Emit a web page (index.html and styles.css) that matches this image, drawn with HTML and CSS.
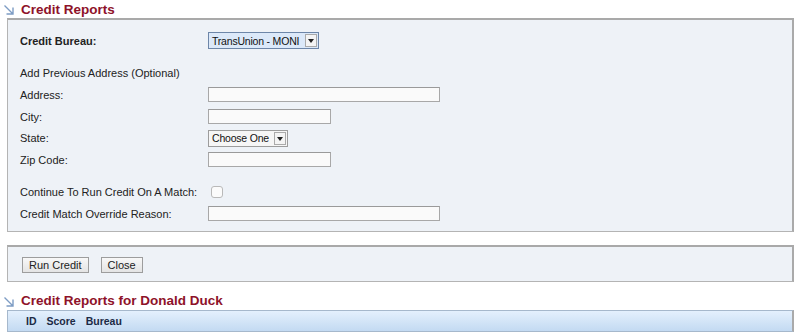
FILE: index.html
```html
<!DOCTYPE html>
<html lang="en">
  <head>
    <meta charset="UTF-8" />
    <title>Credit Reports</title>
    <link rel="stylesheet" href="styles.css">
  </head>
  <body>
    <h2 class="section-title">
      <svg class="arrow" width="12" height="12" viewBox="0 0 12 12">
        <path d="M1.5 1.5 L10 10 M10 3.5 V10 H3.5" fill="none" stroke="#7d9cc4" stroke-width="1.4" />
      </svg>
      Credit Reports
    </h2>

    <div class="panel form-panel">
      <div class="row bureau-row">
        <label class="bold">Credit Bureau:</label>
        <div class="select bureau-select"><span>TransUnion - MONI</span><i class="drop"></i></div>
      </div>

      <div class="row subhead-row">
        <label>Add Previous Address (Optional)</label>
      </div>
      <div class="row">
        <label>Address:</label>
        <input type="text" class="field wide" />
      </div>
      <div class="row">
        <label>City:</label>
        <input type="text" class="field mid" />
      </div>
      <div class="row">
        <label>State:</label>
        <div class="select state-select"><span>Choose One</span><i class="drop"></i></div>
      </div>
      <div class="row">
        <label>Zip Code:</label>
        <input type="text" class="field mid" />
      </div>

      <div class="row gap-row">
        <label>Continue To Run Credit On A Match:</label>
        <span class="check"></span>
      </div>
      <div class="row">
        <label>Credit Match Override Reason:</label>
        <input type="text" class="field wide" />
      </div>
    </div>

    <div class="panel button-panel">
      <button class="btn">Run Credit</button>
      <button class="btn">Close</button>
    </div>

    <h2 class="section-title second">
      <svg class="arrow" width="12" height="12" viewBox="0 0 12 12">
        <path d="M1.5 1.5 L10 10 M10 3.5 V10 H3.5" fill="none" stroke="#7d9cc4" stroke-width="1.4" />
      </svg>
      Credit Reports for Donald Duck
    </h2>

    <div class="table-head">
      <span class="col-id">ID</span>
      <span class="col-score">Score</span>
      <span>Bureau</span>
    </div>
  </body>
</html>
```

FILE: styles.css
```css
body {
  margin: 0;
  padding: 0 6px 0 7px;
  font-family: "Liberation Sans", Arial, sans-serif;
  font-size: 11px;
  color: #222;
  background: #fff;
}
.section-title {
  display: flex;
  align-items: center;
  gap: 6px;
  margin: 0 0 0 -4px;
  height: 18px;
  font-size: 13.5px;
  font-weight: bold;
  color: #8e1229;
}
.section-title.second {
  margin-top: 9px;
  height: 19px;
}
.arrow {
  margin-top: 2px;
}
.panel {
  background: #eef2f7;
  border: 1px solid #b4b4b4;
  border-top: 2px solid #a9a9a9;
  border-right: 2px solid #aaa;
}
.form-panel {
  padding: 12px 0 7px 12px;
}
.row {
  display: flex;
  align-items: center;
  height: 21.7px;
  white-space: nowrap;
}
.row label {
  width: 188px;
  flex: none;
}
.bold {
  font-weight: bold;
}
.bureau-row {
  height: 17px;
  margin-bottom: 13px;
}
.subhead-row {
  height: 22px;
}
.gap-row {
  margin-top: 10px;
  height: 22px;
}
.field {
  box-sizing: border-box;
  height: 15px;
  margin: 0;
  padding: 0;
  background: #fafafa;
  border: 1px solid #a8a8a8;
  border-top-color: #9a9a9a;
}
.wide {
  width: 232px;
}
.mid {
  width: 123px;
}
.select {
  box-sizing: border-box;
  display: flex;
  align-items: center;
  height: 17px;
  border: 1px solid #9c9c9c;
  background: #f6f6f6;
  font-size: 10.5px;
  color: #111;
  white-space: nowrap;
}
.select span {
  flex: 1;
  padding-left: 3px;
  letter-spacing: -0.2px;
}
.bureau-select {
  width: 111px;
  background: #dce9f9;
  border-color: #6d86a8;
}
.state-select {
  width: 80px;
}
.drop {
  position: relative;
  flex: none;
  width: 12px;
  height: 13px;
  margin-right: 1px;
  background: #f4f4f4;
  border: 1px solid #aaa;
  box-sizing: border-box;
}
.drop::after {
  content: "";
  position: absolute;
  left: 2px;
  top: 4px;
  border-left: 3px solid transparent;
  border-right: 3px solid transparent;
  border-top: 4px solid #222;
}
.check {
  box-sizing: border-box;
  width: 12px;
  height: 12px;
  margin-left: 3px;
  border: 1px solid #b9b9b9;
  border-radius: 3px;
  background: #fbfbfb;
}
.button-panel {
  margin-top: 13px;
  display: flex;
  gap: 12px;
  padding: 10px 14px 8px;
}
.btn {
  height: 16px;
  padding: 0 6px;
  font-family: inherit;
  font-size: 11px;
  color: #222;
  background: linear-gradient(#f8f8f8, #e4e4e4);
  border: 1px solid #9d9d9d;
  border-radius: 0;
}
.table-head {
  display: flex;
  align-items: center;
  gap: 10px;
  height: 20px;
  padding-left: 18px;
  font-size: 10.5px;
  font-weight: bold;
  color: #1c2a45;
  background: linear-gradient(#e4f0fd, #c3daf2);
  border: 1px solid #a6b8cc;
  border-right: 2px solid #aaa;
}
```
